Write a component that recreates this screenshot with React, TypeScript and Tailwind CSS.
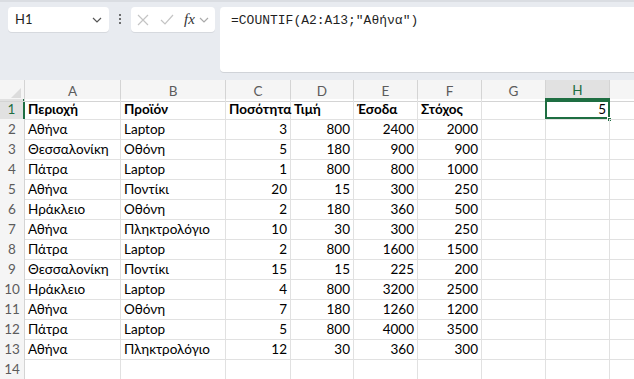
import React from "react";

const cols = ["A", "B", "C", "D", "E", "F", "G", "H", "I"];

type Row = (string | number)[];

const rows: Row[] = [
  ["Περιοχή", "Προϊόν", "Ποσότητα", "Τιμή", "Έσοδα", "Στόχος"],
  ["Αθήνα", "Laptop", 3, 800, 2400, 2000],
  ["Θεσσαλονίκη", "Οθόνη", 5, 180, 900, 900],
  ["Πάτρα", "Laptop", 1, 800, 800, 1000],
  ["Αθήνα", "Ποντίκι", 20, 15, 300, 250],
  ["Ηράκλειο", "Οθόνη", 2, 180, 360, 500],
  ["Αθήνα", "Πληκτρολόγιο", 10, 30, 300, 250],
  ["Πάτρα", "Laptop", 2, 800, 1600, 1500],
  ["Θεσσαλονίκη", "Ποντίκι", 15, 15, 225, 200],
  ["Ηράκλειο", "Laptop", 4, 800, 3200, 2500],
  ["Αθήνα", "Οθόνη", 7, 180, 1260, 1200],
  ["Πάτρα", "Laptop", 5, 800, 4000, 3500],
  ["Αθήνα", "Πληκτρολόγιο", 12, 30, 360, 300],
  [],
];

const gridCols = "grid grid-cols-[25px_96px_105px_65px_63px_64px_64px_64px_64px_64px]";

function Chevron({ className }: { className?: string }) {
  return (
    <svg width="10" height="6" viewBox="0 0 10 6" className={className}>
      <path d="M1 1l4 4 4-4" fill="none" stroke="currentColor" strokeWidth="1.2" />
    </svg>
  );
}

function FormulaBar() {
  return (
    <div className="flex h-[80px] border-t-2 border-[#dadde2] bg-[#e8ebf0] pt-[5px]">
      <div className="ml-[8px] flex h-[25px] w-[101px] items-center justify-between rounded-[4px] bg-white pl-[7px] pr-[7px] text-[13px] text-[#1f1f1f] shadow-[0_1px_0_#d6d9de]">
        <span>H1</span>
        <Chevron className="text-[#555]" />
      </div>
      <div className="flex w-[22px] flex-col items-center pt-[7px]">
        <span className="h-[2px] w-[2px] rounded-full bg-[#444]" />
        <span className="mt-[2px] h-[2px] w-[2px] rounded-full bg-[#444]" />
        <span className="mt-[2px] h-[2px] w-[2px] rounded-full bg-[#444]" />
      </div>
      <div className="flex h-[25px] w-[84px] items-center rounded-[4px] bg-white pl-[6px] shadow-[0_1px_0_#d6d9de]">
        <svg width="12" height="12" viewBox="0 0 12 12" className="text-[#c4c4c4]">
          <path d="M1 1l10 10M11 1L1 11" stroke="currentColor" strokeWidth="1.2" />
        </svg>
        <svg width="14" height="12" viewBox="0 0 14 12" className="ml-[11px] text-[#c4c4c4]">
          <path d="M1 6l4 4 8-9" fill="none" stroke="currentColor" strokeWidth="1.2" />
        </svg>
        <span className="ml-[10px] font-['Liberation_Serif',serif] text-[15px] italic text-[#333]">fx</span>
        <Chevron className="ml-[4px] text-[#aaa]" />
      </div>
      <div className="ml-[5px] h-[65px] flex-1 rounded-l-[4px] bg-white pl-[11px] pt-[4px] font-['Liberation_Mono',monospace] text-[13px] text-[#1f1f1f] shadow-[0_1px_0_#d0d3d8]">
        =COUNTIF(A2:A13;"Αθήνα")
      </div>
    </div>
  );
}

export default function App() {
  return (
    <div className="h-[379px] w-[634px] overflow-hidden bg-white font-['Lato','Noto_Sans',sans-serif] text-[13.5px] text-black">
      <FormulaBar />
      <div className={`${gridCols} h-[19px] bg-[#f5f5f5] text-[13.5px] text-[#5c5c5c]`}>
        <div className="relative border-b border-r border-[#d4d4d4]">
          <svg width="10" height="10" viewBox="0 0 10 10" className="absolute bottom-[3px] right-[3px]">
            <path d="M10 0v10H0z" fill="#dcdcdc" />
          </svg>
        </div>
        {cols.map((c) => (
          <div
            key={c}
            className={
              c === "H"
                ? "flex items-center justify-center border-b-2 border-r border-b-[#1e6e42] border-r-[#d4d4d4] bg-[#e1e1e1] text-[#1e6e42]"
                : "flex items-center justify-center border-b border-r border-[#d4d4d4]"
            }
          >
            {c === "I" ? "" : c}
          </div>
        ))}
      </div>
      {rows.map((r, i) => (
        <div key={i} className={`${gridCols} h-[20px]`}>
          <div
            className={
              i === 0
                ? "flex items-center justify-center border-b border-r-2 border-b-[#d4d4d4] border-r-[#1e6e42] bg-[#e1e1e1] text-[13.5px] text-[#1e6e42]"
                : "flex items-center justify-center border-b border-r border-[#d4d4d4] bg-[#f5f5f5] text-[13.5px] text-[#5c5c5c]"
            }
          >
            {i + 1}
          </div>
          {cols.map((c, j) => {
            const v = r[j];
            const num = typeof v === "number";
            return (
              <div
                key={c}
                className={`relative flex items-center whitespace-nowrap border-b border-r border-[#e1e1e1] leading-[19px] ${
                  num ? "justify-end pr-[3px]" : "pl-[3px]"
                } ${i === 0 ? "font-bold" : ""}`}
              >
                {v}
                {i === 0 && c === "H" && (
                  <>
                    <div className="absolute -left-[1px] -top-[1px] h-[21px] w-[65px] border-2 border-[#1e6e42]" />
                    <span className="absolute right-[3px] font-normal">5</span>
                    <div className="absolute -bottom-[3px] -right-[3px] h-[5px] w-[5px] border border-white bg-[#1e6e42]" />
                  </>
                )}
              </div>
            );
          })}
        </div>
      ))}
    </div>
  );
}
